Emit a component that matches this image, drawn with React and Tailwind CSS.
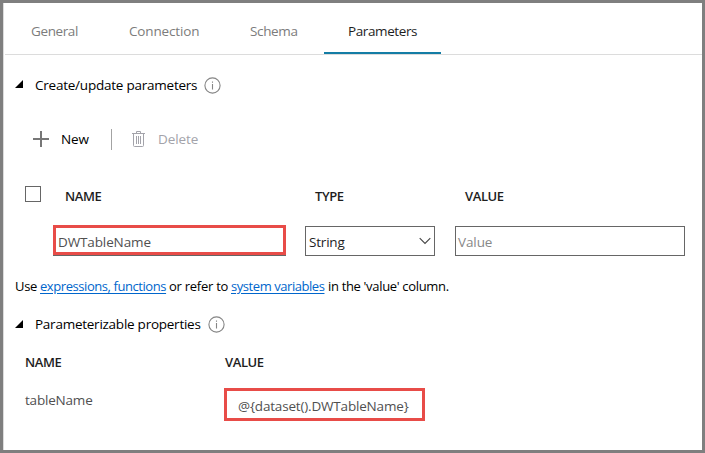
import React from "react";

function Collapse() {
  return (
    <svg className="block w-2 h-2 shrink-0" viewBox="0 0 8 8">
      <path d="M8 0V8H0Z" fill="#000" />
    </svg>
  );
}

function Info() {
  return (
    <svg className="block w-[17px] h-[17px] shrink-0" viewBox="0 0 17 17" fill="none">
      <circle cx="8.5" cy="8.5" r="7.6" stroke="#858585" strokeWidth="1.1" />
      <path d="M8.5 7V12.5M8.5 4.5V5.7" stroke="#858585" strokeWidth="1.1" />
    </svg>
  );
}

function Trash() {
  return (
    <svg className="block w-[13px] h-4 shrink-0" viewBox="0 0 13 16" fill="none" stroke="#a3a3aa">
      <path d="M0 2.5H13M4.5 2.5V.5H8.5V2.5M1.5 3V14.5Q1.5 15.5 2.5 15.5H10.5Q11.5 15.5 11.5 14.5V3" />
      <path d="M4.5 5V13M6.5 5V13M8.5 5V13" />
    </svg>
  );
}

export default function App() {
  return (
    <div className="w-[705px] h-[453px] border-[3px] border-[#7f7f7f] bg-white font-['Open_Sans','Noto_Sans',sans-serif] text-[13.5px] leading-5 text-black whitespace-nowrap overflow-hidden">
      <div className="h-full border-l border-[#dcdcdc]">
        <nav className="h-[52px] ml-px pl-[2px] border-b border-[#dcdcdc] flex text-[#7c7c7c]">
          <div className="w-[98px] pl-6 pt-[18px] tracking-[-0.38px]">General</div>
          <div className="w-[121px] pl-6 pt-[18px] tracking-[-0.15px]">Connection</div>
          <div className="w-[98px] pl-6 pt-[18px] tracking-[-0.35px]">Schema</div>
          <div className="w-[117px] h-[51px] pl-6 pt-[18px] border-b-2 border-[#147da5] text-[#1e1e1e] tracking-[-0.4px]">Parameters</div>
        </nav>

        <div className="mt-5 h-5 pl-[11px] flex items-center">
          <div className="mb-0.5"><Collapse /></div>
          <span className="ml-3 w-[169px] tracking-[-0.23px]">Create/update parameters</span>
          <Info />
        </div>

        <div className="mt-[33px] h-[22px] pl-[29px] flex items-center">
          <svg className="block w-4 h-4" viewBox="0 0 16 16">
            <path d="M8 0V16M0 8H16" stroke="#777" strokeWidth="2" />
          </svg>
          <span className="ml-3 w-[50px] tracking-[-0.1px]">New</span>
          <div className="w-px h-[21px] bg-[#a3a3a3]" />
          <div className="ml-5"><Trash /></div>
          <span className="ml-[13px] text-[#a3a3aa] tracking-[-0.1px]">Delete</span>
        </div>

        <div className="mt-[36px] h-5 pl-[21px] flex font-semibold text-[13px] text-[#1e1e1e]">
          <div className="w-4 h-4 border border-[#666] bg-white" />
          <span className="ml-6 w-[250px] tracking-[-0.4px]">NAME</span>
          <span className="w-[150px] tracking-[-0.4px]">TYPE</span>
          <span className="tracking-[-0.4px]">VALUE</span>
        </div>

        <div className="mt-[19px] h-[31px] pl-[49px] flex text-[#505050]">
          <div className="w-[233px] h-[30px] border-[3px] border-[#e84c48] pl-[2px] leading-[28px] shadow-[0_1px_0_#666]">
            <span className="tracking-[-0.12px]">DWTableName</span>
          </div>
          <div className="ml-[19px] mt-px w-[130px] h-[30px] border border-[#666] flex items-center pl-[3px] text-[#1e1e1e]">
            <span className="pt-[2px] tracking-[-0.2px]">String</span>
            <svg className="ml-auto mr-[3px] w-3 h-2" viewBox="0 0 12 8" fill="none">
              <path d="M.7 1.2L6 6.5L11.3 1.2" stroke="#444" strokeWidth="1.1" />
            </svg>
          </div>
          <div className="ml-5 mt-px w-[230px] h-[30px] border border-[#666] flex items-center pl-[2px] text-[#888]">
            <span className="pt-[2px] tracking-[-0.1px]">Value</span>
          </div>
        </div>

        <div className="mt-5 h-5 pl-[11px] flex text-[13px]">
          <span className="w-[25px] tracking-[-0.3px]">Use</span>
          <span className="w-[129px]">
            <a className="text-[#0066cc] underline underline-offset-2 tracking-[-0.43px]">expressions, functions</a>
          </span>
          <span className="w-[62px] tracking-[-0.25px]">or refer to</span>
          <span className="w-[97px]">
            <a className="text-[#0066cc] underline underline-offset-2 tracking-[-0.44px]">system variables</a>
          </span>
          <span className="tracking-[-0.33px]">in the 'value' column.</span>
        </div>

        <div className="mt-[18px] h-5 pl-[11px] flex items-center">
          <Collapse />
          <span className="ml-3 w-[173px] tracking-[-0.25px]">Parameterizable properties</span>
          <Info />
        </div>

        <div className="mt-[18px] h-5 pl-[21px] flex font-semibold text-[13px] text-[#1e1e1e]">
          <span className="w-[200px] tracking-[-0.4px]">NAME</span>
          <span className="tracking-[-0.4px]">VALUE</span>
        </div>

        <div className="mt-[16px] pl-[21px] flex text-[#505050]">
          <span className="w-[199px] pt-[2px] tracking-[-0.2px]">tableName</span>
          <div className="w-[201px] h-[33px] border-[3px] border-[#e84c48] pl-[11px] leading-[31px]">
            <span className="tracking-[-0.18px]">{"@{dataset().DWTableName}"}</span>
          </div>
        </div>
      </div>
    </div>
  );
}
